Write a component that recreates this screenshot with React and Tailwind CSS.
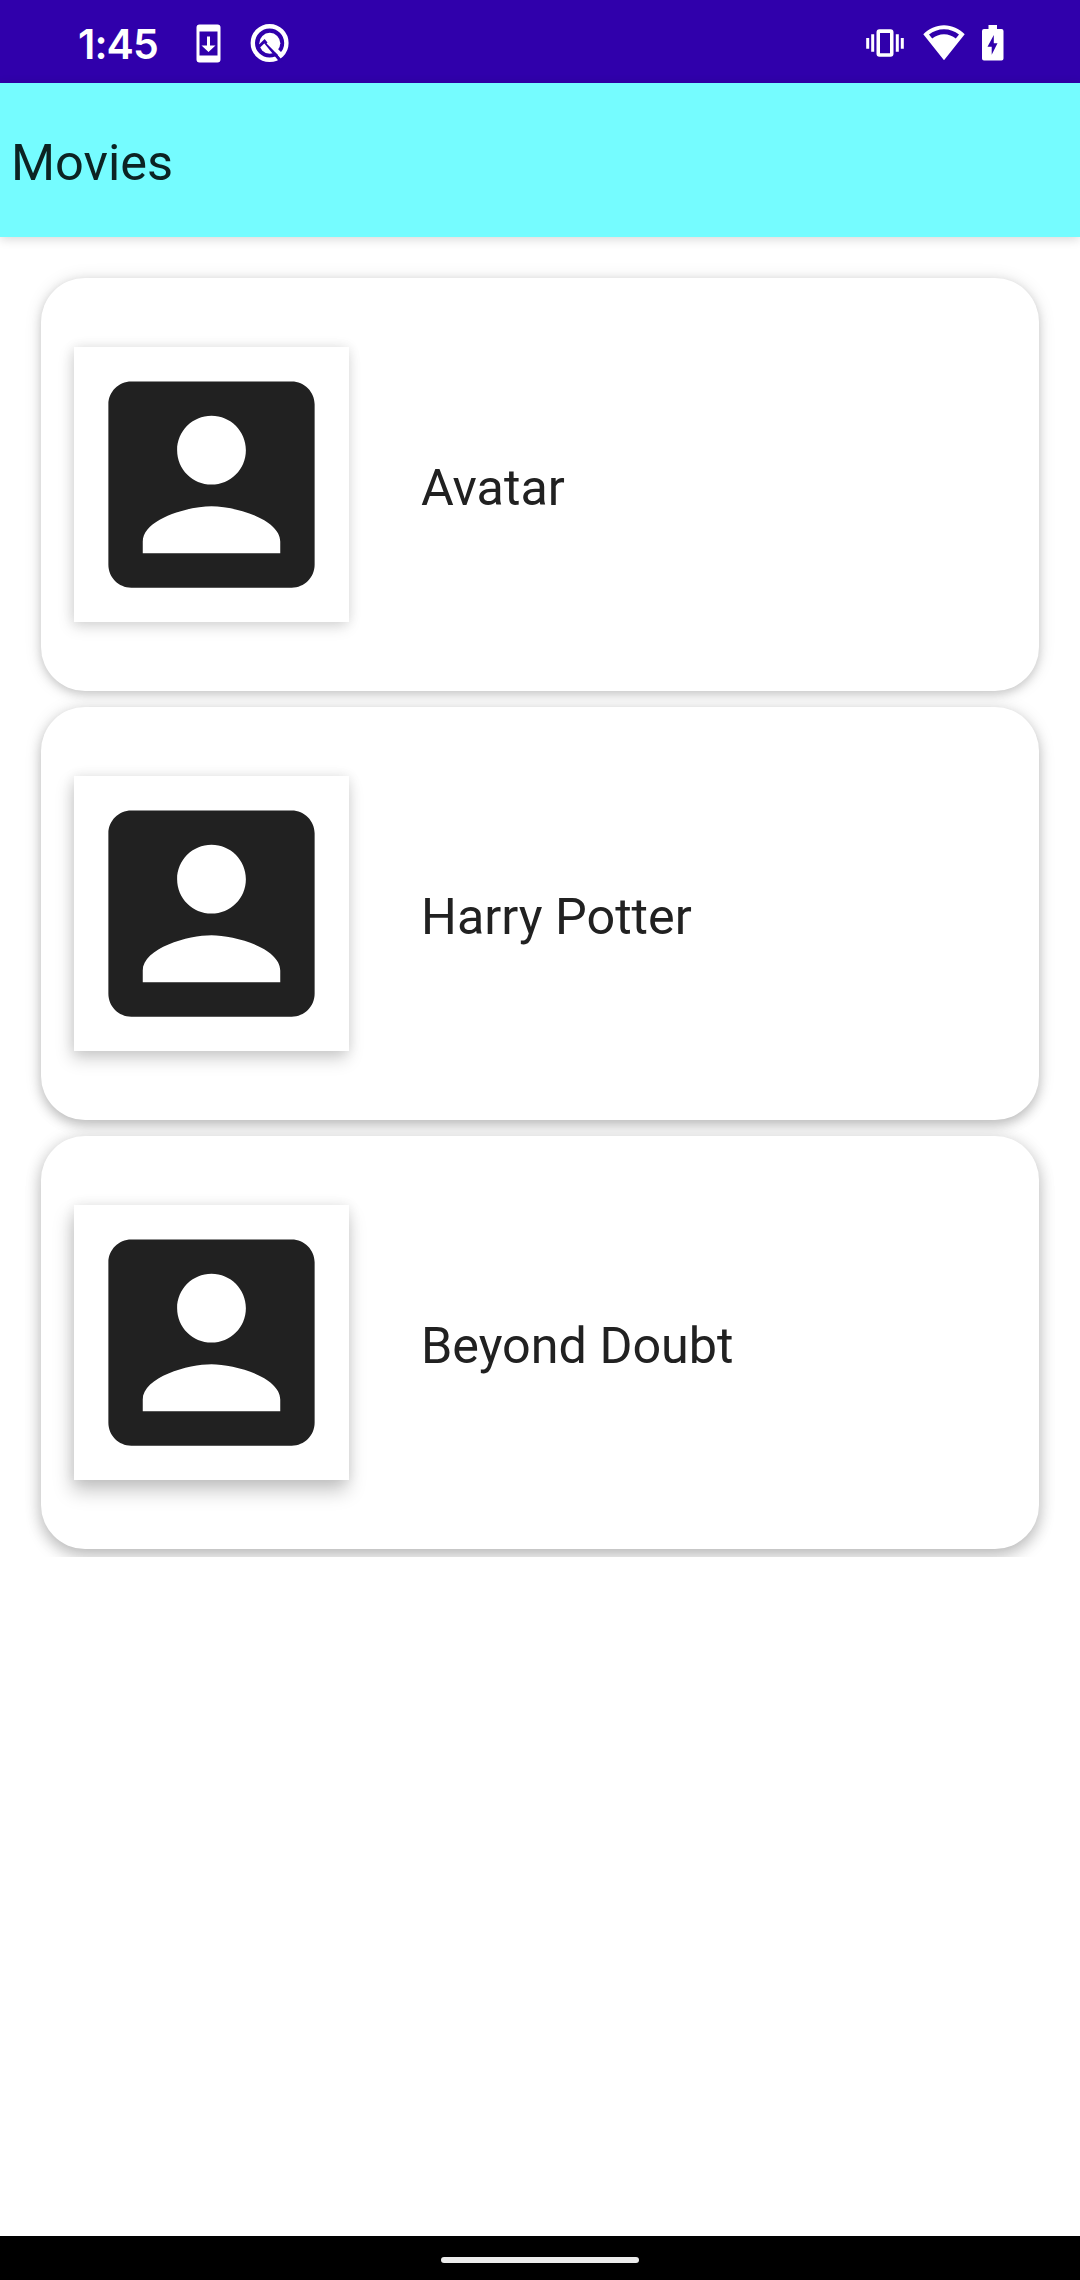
const movies = [
  {
    title: "Avatar",
    card: "shadow-[0_3px_10px_rgba(0,0,0,0.17),0_1px_18px_rgba(0,0,0,0.11)]",
    thumb: "shadow-[-2px_5px_14px_rgba(0,0,0,0.13),0_0_12px_rgba(0,0,0,0.09)]",
  },
  {
    title: "Harry Potter",
    card: "shadow-[0_5px_12px_rgba(0,0,0,0.21),0_1px_18px_rgba(0,0,0,0.11)]",
    thumb: "shadow-[-2px_8px_16px_rgba(0,0,0,0.18),0_0_12px_rgba(0,0,0,0.09)]",
  },
  {
    title: "Beyond Doubt",
    card: "shadow-[0_7px_16px_rgba(0,0,0,0.22),0_1px_18px_rgba(0,0,0,0.11)]",
    thumb: "shadow-[-2px_11px_18px_rgba(0,0,0,0.22),0_0_12px_rgba(0,0,0,0.09)]",
  },
];

function SystemUpdateIcon() {
  return (
    <svg className="ml-[34px] h-[39px] w-[25px]" viewBox="0 0 25 39" fill="#fff">
      <path
        fillRule="evenodd"
        d="M3.500 .5h18a3 3 0 0 1 3 3v32a3 3 0 0 1-3 3h-18a3 3 0 0 1-3-3v-32a3 3 0 0 1 3-3zM3.500 7.500v24h18v-24z"
      />
      <path d="M11 12.500h3v9h5.500l-7 6.500-7-6.500H11z" />
    </svg>
  );
}

function QIcon() {
  return (
    <svg className="ml-[29px] h-[40px] w-[40px]" viewBox="0 0 40 40" fill="none">
      <circle cx="19.600" cy="20" r="16.800" stroke="#fff" strokeWidth="4.400" />
      <circle cx="19.800" cy="20.300" r="10.500" fill="#fff" />
      <path d="M7.500 25L14.500 18.200 31.500 39" stroke="#3000ab" strokeWidth="3" />
      <path d="M18 19L31.500 32.500" stroke="#fff" strokeWidth="4" />
    </svg>
  );
}

function VibrateIcon() {
  return (
    <svg className="h-[28px] w-[40px]" viewBox="0 0 40 28" fill="#fff">
      <path
        fillRule="evenodd"
        d="M13.500 .2h11a3 3 0 0 1 3 3v21.600a3 3 0 0 1-3 3h-11a3 3 0 0 1-3-3V3.200a3 3 0 0 1 3-3zM14 4v20.200h10V4z"
      />
      <path d="M.2 9h3v10.800h-3zM5.200 5.200h3v17.600h-3zM29.800 5.200h3v17.600h-3zM34.800 9h3v10.800h-3z" />
    </svg>
  );
}

function WifiIcon() {
  return (
    <svg className="mt-[-1px] ml-[17px] h-[36px] w-[42px]" viewBox="0 0 42 36" fill="#fff">
      <path
        fillRule="evenodd"
        d="M21 .3C13 .3 5.800 3.900 .3 9.300L21 35.300 41.700 9.300C36.200 3.900 29 .3 21 .3zM21 4.300c5.700 0 10.700 2 15 5.300l-3.200 4C29.500 10.800 25.500 9.200 21 9.200s-8.500 1.600-11.800 4.400L6 9.600c4.300-3.300 9.300-5.300 15-5.300z"
      />
    </svg>
  );
}

function BatteryIcon() {
  return (
    <svg className="ml-[17px] h-[36px] w-[22px]" viewBox="0 0 22 36" fill="#fff">
      <path
        fillRule="evenodd"
        d="M6.500 0h8.500v4h4.500a2 2 0 0 1 2 2v27.500a2 2 0 0 1-2 2h-17.500a2 2 0 0 1-2-2V6a2 2 0 0 1 2-2h4.500zM11.800 10L5.500 21.800h4.200v8L15.500 18.200h-3.700z"
      />
    </svg>
  );
}

function StatusBar() {
  return (
    <div className="flex h-[83px] shrink-0 items-center bg-[#3000ab] pt-[3px] pr-[76px] pl-[78px]">
      <span className="w-[84px] whitespace-nowrap pt-[2px] font-['Inter',sans-serif] text-[41px] leading-none font-semibold tracking-[-0.9px] text-white">
        1:45
      </span>
      <SystemUpdateIcon />
      <QIcon />
      <div className="ml-auto flex items-center">
        <VibrateIcon />
        <WifiIcon />
        <BatteryIcon />
      </div>
    </div>
  );
}

function MovieCard({ movie }) {
  return (
    <div
      className={`flex h-[413px] shrink-0 items-center rounded-[44px] bg-white pl-[33px] ${movie.card}`}
    >
      <div className={`h-[275px] w-[275px] shrink-0 bg-white ${movie.thumb}`}>
        <svg viewBox="0 0 24 24" className="h-[275px] w-[275px]" fill="#212121">
          <path d="M3 5v14c0 1.100.89 2 2 2h14c1.100 0 2-.9 2-2V5c0-1.100-.9-2-2-2H5c-1.110 0-2 .9-2 2zm12 4c0 1.660-1.340 3-3 3s-3-1.340-3-3 1.340-3 3-3 3 1.340 3 3zm-9 8c0-2 4-3.100 6-3.100s6 1.100 6 3.100v1H6v-1z" />
        </svg>
      </div>
      <span className="ml-[72px] pt-[6px] text-[50.300px] leading-[58px] text-[#212121]">
        {movie.title}
      </span>
    </div>
  );
}

export default function App() {
  return (
    <div className="flex h-[2280px] w-[1080px] flex-col overflow-hidden bg-white font-['Roboto',sans-serif]">
      <StatusBar />
      <header className="z-10 flex h-[154px] shrink-0 items-center bg-[#75fcff] pt-[6px] pl-[11px] shadow-[0_2px_10px_rgba(0,0,0,0.16)]">
        <h1 className="text-[50.500px] leading-[58px] text-[#0c2323]">Movies</h1>
      </header>
      <main className="flex h-[1320px] shrink-0 flex-col gap-4 overflow-hidden px-[41px] pt-[41px]">
        {movies.map((m) => (
          <MovieCard key={m.title} movie={m} />
        ))}
      </main>
      <footer className="mt-auto flex h-[44px] shrink-0 items-center justify-center bg-black pt-[4px]">
        <div className="h-[6px] w-[198px] rounded-full bg-[#ebebeb]" />
      </footer>
    </div>
  );
}
